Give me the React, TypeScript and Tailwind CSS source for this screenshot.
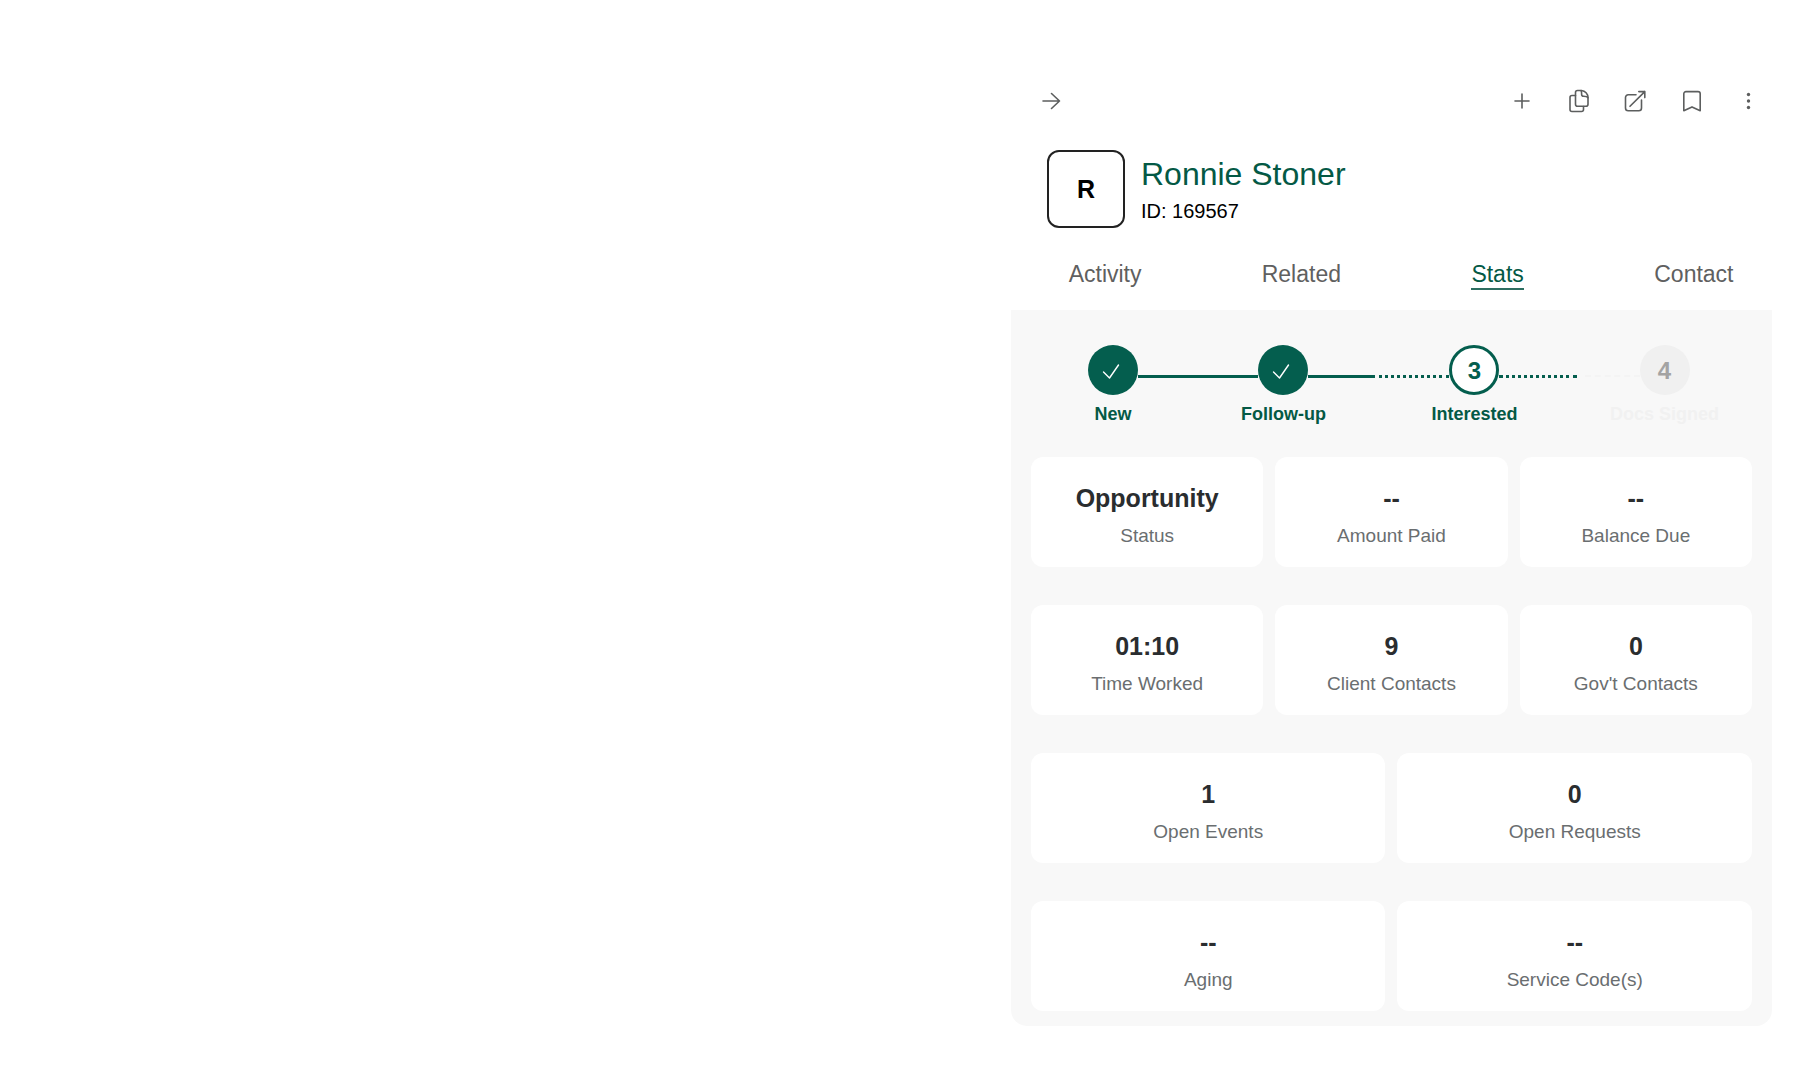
import { useState } from "react";
import type { ReactNode } from "react";
import clsx from "clsx";

const tabs = ["Activity", "Related", "Stats", "Contact"];

const steps = [
  { id: 1, label: "New", state: "done", before: "none", after: "solid" },
  { id: 2, label: "Follow-up", state: "done", before: "solid", after: "solid" },
  { id: 3, label: "Interested", state: "current", before: "dotted", after: "dotted" },
  { id: 4, label: "Docs Signed", state: "todo", before: "faint", after: "none" },
];

const summaryStats = [
  { label: "Status", value: "Opportunity" },
  { label: "Amount Paid", value: "--" },
  { label: "Balance Due", value: "--" },
  { label: "Time Worked", value: "01:10" },
  { label: "Client Contacts", value: "9" },
  { label: "Gov't Contacts", value: "0" },
];

const detailStats = [
  { label: "Open Events", value: "1" },
  { label: "Open Requests", value: "0" },
  { label: "Aging", value: "--" },
  { label: "Service Code(s)", value: "--" },
];

function IconButton({ label, children }: { label: string; children: ReactNode }) {
  return (
    <button type="button" aria-label={label} className="size-6 text-[#5c5e5e] hover:text-black">
      <svg
        viewBox="0 0 24 24"
        className="size-6"
        fill="none"
        stroke="currentColor"
        strokeWidth="1.6"
        strokeLinecap="round"
        strokeLinejoin="round"
      >
        {children}
      </svg>
    </button>
  );
}

function StepLine({ kind }: { kind: string }) {
  return (
    <span className="mt-[30px] min-w-0 flex-1 basis-0">
      <span
        className={clsx(
          "block",
          kind === "solid" && "border-t-3 border-[#045e4e]",
          kind === "dotted" && "border-t-3 border-dotted border-[#045e4e]",
          kind === "faint" && "ml-2 border-t-2 border-dashed border-[#f4f4f4]"
        )}
      />
    </span>
  );
}

function StepCircle({ id, state }: { id: number; state: string }) {
  if (state === "done") {
    return (
      <span className="flex size-[50px] items-center justify-center rounded-full bg-[#045e4e]">
        <svg viewBox="0 0 24 24" className="size-6" fill="none" stroke="white" strokeWidth="1.4">
          <path d="M2.5 14l6 6L17.5 7" strokeLinecap="round" strokeLinejoin="round" />
        </svg>
      </span>
    );
  }

  return (
    <span
      className={clsx(
        "flex size-[50px] items-center justify-center rounded-full pt-0.5 text-2xl font-bold",
        state === "current"
          ? "border-3 border-[#045e4e] bg-white text-[#045e4e]"
          : "bg-[#f0f0f0] text-[#a3a3a3]"
      )}
    >
      {id}
    </span>
  );
}

function StatCard({ label, value }: { label: string; value: string }) {
  return (
    <div className="flex flex-col-reverse gap-[10px] rounded-xl bg-white px-4 pt-[25px] pb-[19px] text-center">
      <dt className="text-[19px] leading-6 text-[#6a6e70]">{label}</dt>
      <dd className="text-[25px] leading-8 font-bold text-[#2a2d2f]">{value}</dd>
    </div>
  );
}

export default function App() {
  const [activeTab, setActiveTab] = useState("Stats");

  return (
    <main className="flex min-h-screen justify-end bg-white pr-10 font-['Liberation_Sans',Arial,sans-serif]">
      <section className="w-[42vw] pt-[89px]">
        {/* Toolbar */}
        <header className="flex items-center justify-between pr-3 pl-7">
          <IconButton label="Collapse panel">
            <path d="M4 12h16.5M12.5 4.5L20.5 12l-8 7.5" />
          </IconButton>
          <div className="flex w-[250px] justify-between">
            <IconButton label="Add">
              <path d="M12 5v14M5 12h14" />
            </IconButton>
            <IconButton label="Copy">
              <path d="M8.5 3.5a2 2 0 0 1 2-2h4c3.6.4 6.5 3.4 6.5 7v6.8a2 2 0 0 1-2 2h-8.5a2 2 0 0 1-2-2z" />
              <path d="M14 1.6c.8 1.2.6 2.6.6 3.7 0 1.2.8 2 2 2 1.7 0 3.6 0 4.3 1.4" />
              <path d="M8.5 6.5H5a2 2 0 0 0-2 2v12a2 2 0 0 0 2 2h9.5a2 2 0 0 0 2-2v-3" />
            </IconButton>
            <IconButton label="Open in new window">
              <path d="M13 5.8H5.2a2.7 2.7 0 0 0-2.7 2.7v10.6a2.7 2.7 0 0 0 2.7 2.7h10.6a2.7 2.7 0 0 0 2.7-2.7V11" />
              <path d="M7 17.3L21.8 2.6M15.8 2.6h6v6" />
            </IconButton>
            <IconButton label="Bookmark">
              <path d="M3.8 21.7V4.8a2.2 2.2 0 0 1 2.2-2.2h12a2.2 2.2 0 0 1 2.2 2.2v16.9L12 17.9z" />
            </IconButton>
            <IconButton label="More">
              <g fill="currentColor" stroke="none">
                <circle cx="12.5" cy="5.5" r="1.7" />
                <circle cx="12.5" cy="12" r="1.7" />
                <circle cx="12.5" cy="18.5" r="1.7" />
              </g>
            </IconButton>
          </div>
        </header>

        {/* Client */}
        <div className="mt-[37px] flex gap-4 pl-9">
          <div className="flex size-[78px] items-center justify-center rounded-xl border-2 border-[#222222] pt-0.5 text-[25px] font-bold text-black">
            R
          </div>
          <div className="pt-1.5">
            <h1 className="text-[32px] leading-9 text-[#045945]">Ronnie Stoner</h1>
            <p className="mt-[5px] text-xl leading-7 text-black">ID: 169567</p>
          </div>
        </div>

        {/* Tabs */}
        <nav className="mt-8 -mr-5 -ml-1 grid grid-cols-4 justify-items-center pb-5">
          {tabs.map((tab) => (
            <button
              key={tab}
              type="button"
              onClick={() => setActiveTab(tab)}
              className={clsx(
                "border-b-2 text-[23px] leading-7",
                tab === activeTab
                  ? "border-[#2c6e60] text-[#045945]"
                  : "border-transparent text-[#5f6060]"
              )}
            >
              {tab}
            </button>
          ))}
        </nav>

        {/* Stats */}
        <div className="rounded-b-2xl bg-[#f8f8f8] px-5 pt-[35px] pb-[15px]">
          <ol className="grid grid-cols-[164fr_177fr_205fr_175fr]">
            {steps.map((step) => (
              <li key={step.id} className="text-center">
                <div className="flex items-start">
                  <StepLine kind={step.before} />
                  <StepCircle id={step.id} state={step.state} />
                  <StepLine kind={step.after} />
                </div>
                <p
                  className={clsx(
                    "mt-[7px] text-lg leading-6 font-bold",
                    step.state === "todo" ? "text-[#f1f1f1]" : "text-[#045945]"
                  )}
                >
                  {step.label}
                </p>
              </li>
            ))}
          </ol>

          <dl className="mt-[31px] grid grid-cols-3 gap-x-3 gap-y-[38px]">
            {summaryStats.map((stat) => (
              <StatCard key={stat.label} label={stat.label} value={stat.value} />
            ))}
          </dl>
          <dl className="mt-[38px] grid grid-cols-2 gap-x-3 gap-y-[38px]">
            {detailStats.map((stat) => (
              <StatCard key={stat.label} label={stat.label} value={stat.value} />
            ))}
          </dl>
        </div>
      </section>
    </main>
  );
}
